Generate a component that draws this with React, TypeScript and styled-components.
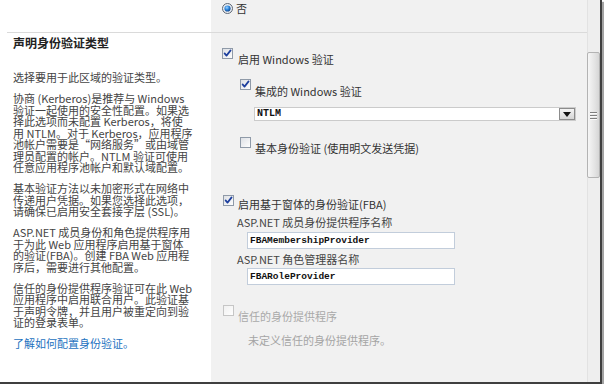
import React, { useId } from "react";
import styled, { createGlobalStyle } from "styled-components";

const Global = createGlobalStyle`
  html, body { margin: 0; padding: 0; background: #ffffff; }
  body { font-family: "Noto Sans CJK SC", "Noto Sans", sans-serif; }
  * { box-sizing: border-box; }
`;

const Frame = styled.div`
  display: flex;
  width: 602px;
  height: 384px;
  border-right: 2px solid #3f3f3f;
  border-bottom: 2px solid #3f3f3f;
  box-shadow: 2px 2px 1px #a3a3a3;
  background: #ffffff;
  overflow: hidden;
`;

const Content = styled.div`
  display: flex;
  flex-direction: column;
  width: 587px;
  flex: none;
  background: #ffffff;
`;

const Section = styled.div<{ $h?: number }>`
  display: flex;
  ${(p) => (p.$h ? `height: ${p.$h}px; flex: none;` : "flex: 1;")}
`;

const Divider = styled.div`
  height: 1px;
  margin-left: 7px;
  background: #dadada;
  flex: none;
`;

const DescCell = styled.div`
  width: 211px;
  flex: none;
  padding: 3px 0 0 13px;
  background: #ffffff;
  color: #444;
`;

const ControlCell = styled.div<{ $top: number }>`
  flex: 1;
  background: #f1f1f1;
  padding: ${(p) => p.$top}px 0 0 11px;
  display: flex;
  flex-direction: column;
  align-items: flex-start;
`;

const Heading = styled.div`
  font-size: 12px;
  font-weight: bold;
  line-height: 14px;
  color: #222;
`;

const Para = styled.p<{ $gap?: number }>`
  margin: ${(p) => p.$gap ?? 9.5}px 0 0 0;
  font-size: 11px;
  line-height: 11.5px;
  white-space: nowrap;
  color: #444;
`;

const HelpLink = styled.a`
  display: block;
  margin-top: 9.5px;
  font-size: 11px;
  line-height: 11.5px;
  color: #2472c0;
  text-decoration: none;
  white-space: nowrap;
`;

const Row = styled.div<{ $mt?: number; $ml?: number }>`
  display: flex;
  align-items: flex-start;
  margin-top: ${(p) => p.$mt ?? 0}px;
  margin-left: ${(p) => p.$ml ?? 0}px;
`;

const RowLabel = styled.span<{ $drop: number; $gap?: number; $disabled?: boolean }>`
  padding-top: ${(p) => p.$drop}px;
  margin-left: ${(p) => p.$gap ?? 5}px;
  font-size: 11px;
  line-height: 13px;
  white-space: nowrap;
  color: ${(p) => (p.$disabled ? "#a9a9a9" : "#333")};
`;

const Nested = styled.div`
  display: flex;
  flex-direction: column;
  align-items: flex-start;
  margin-left: 18px;
`;

const FakeSelect = styled.div`
  display: flex;
  align-items: stretch;
  width: 322px;
  height: 14px;
  margin: 9px 0 0 14px;
  border: 1px solid #cbcbcb;
  background: #ffffff;
`;

const SelectValue = styled.span`
  flex: 1;
  padding-left: 2px;
  font-family: "Liberation Mono", monospace;
  font-weight: bold;
  font-size: 10px;
  line-height: 12px;
  color: #111;
`;

const SelectButton = styled.span`
  width: 16px;
  display: flex;
  align-items: center;
  justify-content: center;
  border: 1px solid #8c8c8c;
  background: linear-gradient(#f4f4f4, #d6d6d6);
`;

const FieldLabel = styled.div<{ $mt: number }>`
  margin: ${(p) => p.$mt}px 0 0 15px;
  font-size: 11px;
  line-height: 13px;
  color: #444;
  white-space: nowrap;
`;

const TextBox = styled.input<{ $mt: number }>`
  width: 208px;
  height: 17px;
  margin: ${(p) => p.$mt}px 0 0 25px;
  padding: 0 0 0 2px;
  border: 1px solid #c2cddb;
  background: #ffffff;
  font-family: "Liberation Mono", monospace;
  font-weight: bold;
  font-size: 9.5px;
  color: #111;
  outline: none;
`;

const Hint = styled.div<{ $mt: number }>`
  margin: ${(p) => p.$mt}px 0 0 26px;
  font-size: 11px;
  line-height: 13px;
  color: #a5a5a5;
  white-space: nowrap;
`;

const ScrollTrack = styled.div`
  width: 13px;
  flex: none;
  background: #eeeeee;
  border-left: 1px solid #e2e2e2;
  padding-top: 52px;
`;

const Thumb = styled.div`
  height: 126px;
  margin-left: -1px;
  border: 1px solid #b3b3b3;
  border-radius: 2px;
  background: linear-gradient(to right, #f6f6f6, #e4e4e4 60%, #d6d6d6);
  display: flex;
  flex-direction: column;
  align-items: center;
  justify-content: center;
  gap: 2px;
`;

const GripLine = styled.span`
  display: block;
  width: 7px;
  height: 1px;
  background: #7e7e7e;
  box-shadow: 0 1px 0 #fafafa;
`;

function CheckBox({ checked, disabled }: { checked?: boolean; disabled?: boolean }) {
  const id = useId().replace(/:/g, "");
  return (
    <svg width="11" height="11" viewBox="0 0 11 11" style={{ flex: "none" }}>
      <defs>
        <linearGradient id={`cb${id}`} x1="0" y1="0" x2="1" y2="1">
          <stop offset="0" stopColor={disabled ? "#f0f0f0" : "#dcdfe4"} />
          <stop offset="1" stopColor="#ffffff" />
        </linearGradient>
      </defs>
      <rect x="0.5" y="0.5" width="10" height="10" fill={`url(#cb${id})`} stroke={disabled ? "#c6c6c6" : "#8f9aa8"} />
      {checked && (
        <path d="M2.6 5.4 L4.5 7.6 L8.6 2.4" fill="none" stroke="#1d3f9e" strokeWidth="1.7" strokeLinecap="round" strokeLinejoin="round" />
      )}
    </svg>
  );
}

function Radio() {
  const id = useId().replace(/:/g, "");
  return (
    <svg width="11" height="11" viewBox="0 0 11 11" style={{ flex: "none", marginTop: 1 }}>
      <defs>
        <radialGradient id={`rd${id}`} cx="0.4" cy="0.35" r="0.7">
          <stop offset="0" stopColor="#9fd2ff" />
          <stop offset="0.5" stopColor="#2c86dc" />
          <stop offset="1" stopColor="#0c3f86" />
        </radialGradient>
      </defs>
      <circle cx="5.5" cy="5.5" r="5" fill="#e9edf2" stroke="#5d6775" />
      <circle cx="5.5" cy="5.5" r="3.1" fill={`url(#rd${id})`} />
    </svg>
  );
}

export default function App() {
  return (
    <>
      <Global />
      <Frame>
        <Content>
          <Section $h={32}>
            <DescCell />
            <ControlCell $top={2}>
              <Row>
                <Radio />
                <RowLabel $drop={0} $gap={3}>否</RowLabel>
              </Row>
            </ControlCell>
          </Section>
          <Divider />
          <Section>
            <DescCell>
              <Heading>声明身份验证类型</Heading>
              <Para $gap={22}>选择要用于此区域的验证类型。</Para>
              <Para>
                协商 (Kerberos)是推荐与 Windows<br />
                验证一起使用的安全性配置。如果选<br />
                择此选项而未配置 Kerberos，将使<br />
                用 NTLM。对于 Kerberos，应用程序<br />
                池帐户需要是“网络服务”或由域管<br />
                理员配置的帐户。NTLM 验证可使用<br />
                任意应用程序池帐户和默认域配置。
              </Para>
              <Para>
                基本验证方法以未加密形式在网络中<br />
                传递用户凭据。如果您选择此选项，<br />
                请确保已启用安全套接字层 (SSL)。
              </Para>
              <Para>
                ASP.NET 成员身份和角色提供程序用<br />
                于为此 Web 应用程序启用基于窗体<br />
                的验证(FBA)。创建 FBA Web 应用程<br />
                序后，需要进行其他配置。
              </Para>
              <Para>
                信任的身份提供程序验证可在此 Web<br />
                应用程序中启用联合用户。此验证基<br />
                于声明令牌，并且用户被重定向到验<br />
                证的登录表单。
              </Para>
              <HelpLink href="#">了解如何配置身份验证。</HelpLink>
            </DescCell>
            <ControlCell $top={15}>
              <Row>
                <CheckBox checked />
                <RowLabel $drop={5}>启用 Windows 验证</RowLabel>
              </Row>
              <Nested>
                <Row $mt={13}>
                  <CheckBox checked />
                  <RowLabel $drop={6} $gap={4}>集成的 Windows 验证</RowLabel>
                </Row>
                <FakeSelect>
                  <SelectValue>NTLM</SelectValue>
                  <SelectButton>
                    <svg width="8" height="5" viewBox="0 0 8 5">
                      <path d="M0 0 H8 L4 5 Z" fill="#111" />
                    </svg>
                  </SelectButton>
                </FakeSelect>
                <Row $mt={16}>
                  <CheckBox />
                  <RowLabel $drop={5} $gap={4}>基本身份验证 (使用明文发送凭据)</RowLabel>
                </Row>
              </Nested>
              <Row $mt={40} $ml={1}>
                <CheckBox checked />
                <RowLabel $drop={3} $gap={4}>启用基于窗体的身份验证(FBA)</RowLabel>
              </Row>
              <FieldLabel $mt={5}>ASP.NET 成员身份提供程序名称</FieldLabel>
              <TextBox $mt={3} readOnly defaultValue="FBAMembershipProvider" />
              <FieldLabel $mt={4}>ASP.NET 角色管理器名称</FieldLabel>
              <TextBox $mt={2} readOnly defaultValue="FBARoleProvider" />
              <Row $mt={20} $ml={1}>
                <CheckBox disabled />
                <RowLabel $drop={5} $gap={4} $disabled>信任的身份提供程序</RowLabel>
              </Row>
              <Hint $mt={11}>未定义信任的身份提供程序。</Hint>
            </ControlCell>
          </Section>
        </Content>
        <ScrollTrack>
          <Thumb>
            <GripLine />
            <GripLine />
            <GripLine />
          </Thumb>
        </ScrollTrack>
      </Frame>
    </>
  );
}
